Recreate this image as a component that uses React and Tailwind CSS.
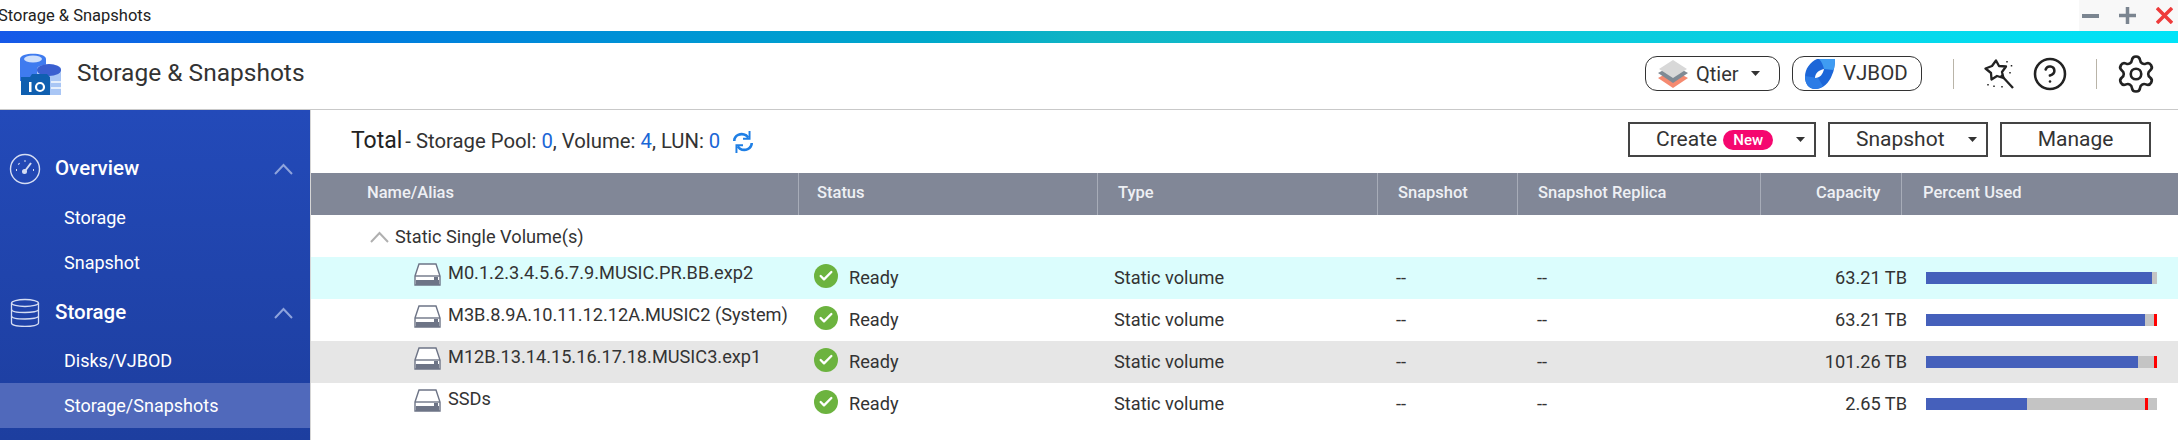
import { CircleHelp, Settings, Check } from 'lucide-react'

const filas = [
  { nombre: 'M0.1.2.3.4.5.6.7.9.MUSIC.PR.BB.exp2', cap: '63.21 TB', usado: 226, rojo: false, fondo: 'bg-[#dbfdfd]' },
  { nombre: 'M3B.8.9A.10.11.12.12A.MUSIC2 (System)', cap: '63.21 TB', usado: 219, rojo: 228, fondo: 'bg-white' },
  { nombre: 'M12B.13.14.15.16.17.18.MUSIC3.exp1', cap: '101.26 TB', usado: 212, rojo: 228, fondo: 'bg-[#e6e6e6]' },
  { nombre: 'SSDs', cap: '2.65 TB', usado: 101, rojo: 219, fondo: 'bg-white' },
]

const columnas = 'grid grid-cols-[488px_299px_280px_140px_243px_141px_276px]'

function Caret({ className }) {
  return (
    <svg width="9" height="5" viewBox="0 0 9 5" className={className}>
      <path d="M0 0h9L4.5 5z" fill="#333" />
    </svg>
  )
}

function Flecha({ color, className }) {
  return (
    <svg width="19" height="12" viewBox="0 0 19 12" fill="none" className={className}>
      <path d="M1 11 9.500 2 18 11" stroke={color} strokeWidth="2" />
    </svg>
  )
}

function LogoApp() {
  return (
    <svg width="42" height="42" viewBox="0 0 42 42">
      <path d="M1 6c0-7 26-7 26 0v22H1z" fill="#3f7bef" />
      <ellipse cx="14" cy="6" rx="9" ry="3.500" fill="#cfe0fb" />
      <path d="M18 16c0-6 24-6 24 0v26H18z" fill="#a9c6f5" />
      <ellipse cx="30" cy="17" rx="12" ry="6" fill="#3a5fd0" />
      <path d="M32 29h10M32 35h10" stroke="#e6effc" strokeWidth="2" />
      <path d="M2 24h9l2-3h15l3 3v18H2z" fill="#0f5fb0" />
      <rect x="10" y="29" width="2.500" height="10" fill="#fff" />
      <circle cx="21" cy="34" r="4" fill="none" stroke="#fff" strokeWidth="2.200" />
    </svg>
  )
}

function IconoGauge() {
  return (
    <svg width="32" height="32" viewBox="0 0 32 32" fill="none" stroke="#d5ddf3" strokeWidth="1.4">
      <circle cx="16" cy="16" r="14.500" />
      <path d="M16 18l6-8" strokeWidth="2" />
      <circle cx="15.500" cy="18.500" r="1.800" fill="#d5ddf3" />
      <path d="M7 17h1M9.500 10.500l.8.8M16 7.500v1M24 17h1" strokeWidth="2" />
    </svg>
  )
}

function IconoDisco() {
  return (
    <svg width="30" height="30" viewBox="0 0 30 30" fill="none" stroke="#d5ddf3" strokeWidth="1.3">
      <ellipse cx="15" cy="5" rx="13.500" ry="3.500" />
      <path d="M1.500 5v20c0 4.500 27 4.500 27 0V5" />
      <path d="M1.500 11.500c0 4 27 4 27 0M1.500 18c0 4 27 4 27 0" />
    </svg>
  )
}

function IconoVolumen() {
  return (
    <svg width="27" height="23" viewBox="0 0 27 23" fill="none">
      <path d="M1 13 5 1h17l4 12v9H1z" fill="#fff" stroke="#6d7486" strokeWidth="1.4" />
      <path d="M1 13h25" stroke="#6d7486" strokeWidth="1.4" />
      <rect x="2" y="17" width="23" height="5" fill="#6d7486" />
      <rect x="20" y="14" width="4" height="3" fill="#6d7486" />
    </svg>
  )
}

function Qtier() {
  return (
    <svg width="30" height="30" viewBox="0 0 30 30">
      <path d="M0 19 15 11l15 8-15 10z" fill="#f58a70" />
      <path d="M0 14 15 6l15 8-15 10z" fill="#7f8a94" />
      <path d="M1 10 15 1l14 9-14 9z" fill="#d8d8d8" />
    </svg>
  )
}

function Vjbod() {
  return (
    <svg width="30" height="30" viewBox="0 0 30 30">
      <path d="M12 0h18c0 6-1 12-3 16-3 8-9 14-17 14C4 30 0 25 0 18 0 10 5 3 12 0z" fill="#1c66d8" />
      <path d="M14 0h16c0 4-.5 8-1.500 11L19 10c-1-4-2-7-5-10z" fill="#3f9cf2" />
      <path d="M0 17c0 8 4 13 10 13 3 0 6-1 8-3l-5-8z" fill="#2c7ce6" />
      <path d="M10 19c0-5 4-8 9-9-1 5-4 9-9 9z" fill="#fff" />
    </svg>
  )
}

function Varita() {
  return (
    <svg width="30" height="30" viewBox="0 0 30 30" fill="none" stroke="#222">
      <path d="M12 1.500l3 5.500 7 .5-4 5.500 1.500 6-6.500-2-5.500 3.500-.5-6.500L1.500 9.500 8 7z" strokeWidth="2.300" strokeLinejoin="round" />
      <path d="M17 16 29 29" strokeWidth="2.300" />
      <path d="M23 2v1.500M27.500 6v1.500M26 13v1.500M4 25v1.500M10 26.500v1.500M18 27v1.500" strokeWidth="1.500" />
    </svg>
  )
}

function Refrescar() {
  return (
    <svg width="22" height="24" viewBox="0 0 20 22" fill="none" stroke="#1f7fe5" strokeWidth="2.400">
      <path d="M2 10c0-5 6-8 11-5l2 2" />
      <path d="M18 12c0 5-6 8-11 5l-2-2" />
      <path d="M16 1v7h-6M4 21v-7h6" strokeWidth="1.800" />
    </svg>
  )
}

function BarraUso({ usado, rojo }) {
  return (
    <div className="relative w-[231px] h-3 ml-6 bg-[#c4c4c4]">
      <div className="h-3 bg-[#4560bb]" style={{ width: usado }}></div>
      {rojo && <div className="absolute top-0 w-[3px] h-3 bg-[#ff0000]" style={{ left: rojo }}></div>}
    </div>
  )
}

export default function App() {
  return (
    <div className="w-[2178px] h-[440px] overflow-hidden bg-white text-[#333] font-['Roboto',sans-serif]">

      {/* Barra de ventana */}
      <div className="h-[31px] flex justify-between bg-white">
        <span className="-ml-0.5 text-[16.500px] leading-[31px] text-[#222]">Storage &amp; Snapshots</span>
        <div className="w-[99px] flex items-center pl-[3px] gap-[20px] bg-[#f8f8f8]">
          <div className="w-[17px] h-1 bg-[#7b8590]"></div>
          <svg width="17" height="17" viewBox="0 0 17 17"><path d="M8.500 0v17M0 8.500h17" stroke="#7b8590" strokeWidth="3.500" /></svg>
          <svg width="17" height="17" viewBox="0 0 17 17"><path d="M1 1l15 15M16 1 1 16" stroke="#ee3b3b" strokeWidth="3.500" /></svg>
        </div>
      </div>
      <div className="h-3 bg-gradient-to-r from-[#1658e8] via-[#10b4c4] to-[#00e4f8]"></div>

      {/* Cabecera */}
      <div className="h-[67px] pb-[5px] flex items-center border-b border-[#c9c9c9]">
        <div className="ml-[19px] mr-4"><LogoApp /></div>
        <h1 className="text-[24.500px] text-[#333]">Storage &amp; Snapshots</h1>
        <div className="ml-auto flex items-center">
          <div className="w-[135px] h-[35px] flex items-center pl-3 border border-[#333] rounded-[12px]">
            <Qtier />
            <span className="ml-2 text-[20px]">Qtier</span>
            <Caret className="ml-3" />
          </div>
          <div className="w-[130px] h-[35px] ml-3 flex items-center pl-3 border border-[#333] rounded-[12px]">
            <Vjbod />
            <span className="ml-2 text-[20.500px]">VJBOD</span>
          </div>
          <div className="w-px h-[30px] ml-[31px] bg-[#b9b4a8]"></div>
          <div className="ml-[30px]"><Varita /></div>
          <CircleHelp className="ml-[18px] w-9 h-9 text-[#222]" strokeWidth={1.7} />
          <div className="w-px h-[30px] ml-[28px] bg-[#b9b4a8]"></div>
          <Settings className="ml-[18px] mr-[21px] w-[42px] h-[42px] text-[#222]" strokeWidth={1.5} />
        </div>
      </div>

      <div className="flex h-[330px]">

        {/* Menu lateral */}
        <aside className="w-[310px] pt-9 text-white bg-gradient-to-b from-[#234ab9] to-[#1d3e9f]">
          <div className="h-[45px] flex items-center pl-[9px] pr-[17px]">
            <IconoGauge />
            <span className="ml-[14px] text-[20.500px] font-medium">Overview</span>
            <Flecha color="#8ea3dc" className="ml-auto" />
          </div>
          <div className="h-[45px] mt-1 pl-16 text-[18px] leading-[45px]">Storage</div>
          <div className="h-[45px] pl-16 text-[18px] leading-[45px]">Snapshot</div>
          <div className="h-[45px] mt-[5px] flex items-center pl-[10px] pr-[17px]">
            <IconoDisco />
            <span className="ml-[15px] text-[20.500px] font-medium">Storage</span>
            <Flecha color="#8ea3dc" className="ml-auto" />
          </div>
          <div className="h-[45px] mt-[3px] pl-16 text-[18px] leading-[45px]">Disks/VJBOD</div>
          <div className="h-[45px] pl-16 text-[18px] leading-[45px] bg-[#5069bb]">Storage/Snapshots</div>
        </aside>

        {/* Contenido */}
        <main className="flex-1 border-l border-[#d5d5d5]">
          <div className="h-[63px] flex items-center pl-10">
            <span className="text-[23px] text-[#222]">Total</span>
            <span className="ml-[3px] text-[20.300px]">- Storage Pool: <span className="text-[#1a66d6]">0</span>, Volume: <span className="text-[#1a66d6]">4</span>, LUN: <span className="text-[#1a66d6]">0</span></span>
            <div className="ml-3"><Refrescar /></div>
            <div className="ml-auto mr-[27px] mb-1 flex items-center gap-3 text-[21px]">
              <div className="relative w-[188px] h-[35px] flex items-center pl-[26px] border-2 border-[#444]">
                Create
                <span className="ml-[6px] w-[50px] h-5 rounded-full bg-[#f5076f] text-white text-[15px] font-medium leading-5 text-center">New</span>
                <Caret className="absolute right-[9px] top-[13px]" />
              </div>
              <div className="relative w-[160px] h-[35px] flex items-center pl-[26px] border-2 border-[#444]">
                Snapshot
                <Caret className="absolute right-[9px] top-[13px]" />
              </div>
              <div className="w-[151px] h-[35px] flex items-center justify-center border-2 border-[#444]">Manage</div>
            </div>
          </div>

          {/* Tabla */}
          <div className={`${columnas} h-[42px] bg-[#818797] text-[#eef0f4] text-[16.500px] font-medium leading-[40px]`}>
            <div className="pl-14 border-r border-[#a7acb8]">Name/Alias</div>
            <div className="pl-[18px] border-r border-[#a7acb8]">Status</div>
            <div className="pl-5 border-r border-[#a7acb8]">Type</div>
            <div className="pl-5 border-r border-[#a7acb8]">Snapshot</div>
            <div className="pl-5 border-r border-[#a7acb8]">Snapshot Replica</div>
            <div className="pl-[55px] border-r border-[#a7acb8]">Capacity</div>
            <div className="pl-[21px]">Percent Used</div>
          </div>

          <div className="h-[42px] flex items-center pl-[59px] pt-0.5 text-[18.200px]">
            <Flecha color="#b0b0b0" />
            <span className="ml-1.5">Static Single Volume(s)</span>
          </div>

          {filas.map(fila => (
            <div key={fila.nombre} className={`${columnas} h-[42px] items-center text-[18.200px] ${fila.fondo}`}>
              <div className="flex items-start h-[42px] pl-[103px] pt-[6px]">
                <IconoVolumen />
                <span className="ml-[7px] leading-5">{fila.nombre}</span>
              </div>
              <div className="flex items-center pl-[15px]">
                <span className="w-6 h-6 -mt-1 flex items-center justify-center rounded-full bg-[#6cb33f]">
                  <Check className="w-4 h-4 text-white" strokeWidth={3.5} />
                </span>
                <span className="ml-[11px]">Ready</span>
              </div>
              <div className="pl-4">Static volume</div>
              <div className="pl-[18px]">--</div>
              <div className="pl-[19px]">--</div>
              <div className="text-right w-[146px]">{fila.cap}</div>
              <BarraUso usado={fila.usado} rojo={fila.rojo} />
            </div>
          ))}
        </main>
      </div>
    </div>
  )
}
